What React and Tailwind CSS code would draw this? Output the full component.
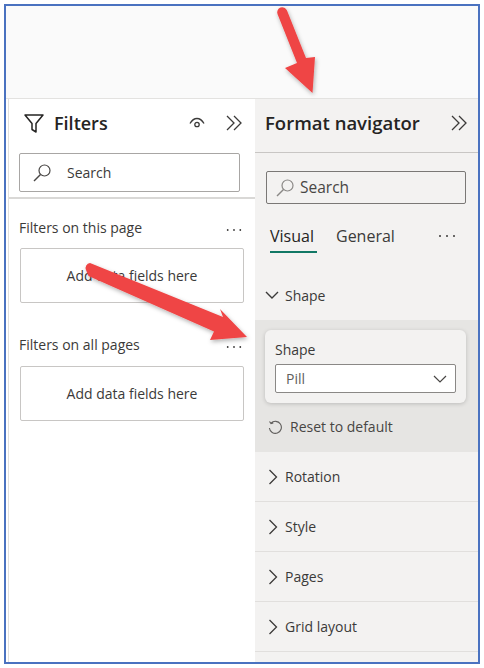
const font = { fontFamily: '"Open Sans", "Noto Sans", sans-serif' };

function Chevrons({ className }) {
  return (
    <svg className={className} width="18" height="16" viewBox="0 0 18 16" fill="none" stroke="#3b3a39" strokeWidth="1.3">
      <path d="M2 1l7 7-7 7M9 1l7 7-7 7" />
    </svg>
  );
}

function SearchIcon({ color }) {
  return (
    <svg width="20" height="20" viewBox="0 0 20 20" fill="none" stroke={color} strokeWidth="1.2">
      <circle cx="12.5" cy="7.5" r="5.5" />
      <path d="M8.5 11.5L2 18" strokeWidth="1.5" />
    </svg>
  );
}

function Dots({ className }) {
  return (
    <svg className={className} width="18" height="4" viewBox="0 0 18 4" fill="#3b3a39">
      <circle cx="2" cy="2" r="1" />
      <circle cx="9" cy="2" r="1" />
      <circle cx="16" cy="2" r="1" />
    </svg>
  );
}

function Right() {
  return (
    <svg width="10" height="16" viewBox="0 0 10 16" fill="none" stroke="#3b3a39" strokeWidth="1.3">
      <path d="M1.5 1l7 7-7 7" />
    </svg>
  );
}

function DropBox({ mt }) {
  return (
    <div className={`${mt} ml-[11px] mr-[11px] h-[55px] flex items-center justify-center border border-[#c8c6c4] rounded-[2px] text-[14px] text-[#3b3a39] bg-white`}>
      Add data fields here
    </div>
  );
}

function Row({ label }) {
  return (
    <div className="h-[50px] flex items-center pl-[13px] gap-[7px] border-b border-[#e1dfdd] text-[14px] font-medium text-[#3b3a39]">
      <Right />
      <span>{label}</span>
    </div>
  );
}

export default function App() {
  return (
    <div style={font} className="relative w-[484px] h-[668px] bg-white overflow-hidden pt-[4px] pl-[4px]">
      <div className="w-[476px] h-[660px] border-2 border-[#4a72c0] bg-white flex flex-col overflow-hidden">
        <div className="h-[93px] shrink-0 bg-[#fafafa] border-b border-[#e3e2e0]" />
        <div className="flex flex-1 min-h-0 pl-[2px]">
          <div className="w-[247px] shrink-0 bg-white border-l border-[#e1dfdd]">
            <div className="h-[48px] flex items-center pl-[14px] pr-[12px]">
              <svg width="22" height="22" viewBox="0 0 22 22" fill="none" stroke="#252423" strokeWidth="1.5">
                <path d="M2 3h18l-7 8.500V20l-4-2.500v-6z" strokeLinejoin="round" />
              </svg>
              <span className="ml-[9px] text-[18px] font-semibold text-[#252423]">Filters</span>
              <svg className="ml-auto mr-[20px]" width="16" height="12" viewBox="0 0 16 12" fill="none" stroke="#3b3a39" strokeWidth="1.3">
                <path d="M1 6.500C3 3 5.500 1.500 8 1.500s5 1.500 7 5" />
                <circle cx="8" cy="7.500" r="2.200" />
              </svg>
              <Chevrons />
            </div>
            <div className="ml-[10px] w-[221px] h-[39px] mt-[6px] flex items-center pl-[12px] gap-[15px] border border-[#a8a6a4] rounded-[2px] text-[14px] text-[#3b3a39]">
              <SearchIcon color="#484644" />
              <span>Search</span>
            </div>
            <div className="mt-[5px] border-t-2 border-[#d9d8d6]" />
            <div className="mt-[18px] pl-[10px] pr-[11px] h-[20px] flex items-center justify-between text-[14px] text-[#3b3a39]">
              <span>Filters on this page</span>
              <Dots className="mt-[6px] mr-[1px] scale-90" />
            </div>
            <DropBox mt="mt-[11px]" />
            <div className="mt-[31px] pl-[10px] pr-[11px] h-[20px] flex items-center justify-between text-[14px] text-[#3b3a39]">
              <span>Filters on all pages</span>
              <Dots className="mt-[6px] mr-[1px] scale-90" />
            </div>
            <DropBox mt="mt-[12px]" />
          </div>
          <div className="flex-1 min-w-0 bg-[#f3f2f1]">
            <div className="h-[54px] flex items-center pl-[10px] pr-[10px] pb-[6px] justify-between border-b border-[#c8c6c4]">
              <span className="text-[18.500px] font-semibold text-[#252423]">Format navigator</span>
              <Chevrons />
            </div>
            <div className="mt-[18px] ml-[11px] w-[200px] h-[33px] flex items-center pl-[8px] gap-[5px] border border-[#7a7876] rounded-[2px] text-[15.500px] text-[#484644]">
              <SearchIcon color="#8a8886" />
              <span>Search</span>
            </div>
            <div className="mt-[20px] pl-[15px] pr-[22px] flex items-start text-[16px] text-[#3b3a39]">
              <div className="w-[47px] h-[29px] border-b-2 border-[#117865] font-medium text-[#252423]">Visual</div>
              <div className="ml-[19px]">General</div>
              <Dots className="ml-auto mt-[10px]" />
            </div>
            <div className="mt-[29px] h-[38px] pl-[10px] pb-[12px] flex items-center gap-[6px] text-[14px] font-medium text-[#3b3a39]">
              <svg width="14" height="9" viewBox="0 0 14 9" fill="none" stroke="#3b3a39" strokeWidth="1.4">
                <path d="M1 1l6 6 6-6" />
              </svg>
              <span>Shape</span>
            </div>
            <div className="h-[132px] bg-[#e6e5e3] pt-[10px]">
              <div className="ml-[10px] w-[201px] h-[73px] rounded-[6px] bg-[#f3f2f1] shadow-[0_1px_4px_rgba(0,0,0,0.18)] pt-[10px] px-[10px]">
                <div className="text-[14px] leading-[19px] text-[#3b3a39]">Shape</div>
                <div className="mt-[5px] h-[29px] flex items-center justify-between pl-[10px] pr-[8px] bg-white border border-[#8a8886] rounded-[2px] text-[14px] text-[#605e5c]">
                  <span>Pill</span>
                  <svg width="14" height="8" viewBox="0 0 14 8" fill="none" stroke="#484644" strokeWidth="1.2">
                    <path d="M1 1l6 6 6-6" />
                  </svg>
                </div>
              </div>
              <div className="mt-[14px] ml-[13px] flex items-center gap-[8px] text-[14px] leading-[19px] text-[#484644]">
                <svg width="14" height="14" viewBox="0 0 14 14" fill="none" stroke="#605e5c" strokeWidth="1.1">
                  <path d="M3 3.200A6 6 0 1 1 1.400 8M1.500 1.500L3 3.500l2.300-.6" />
                </svg>
                <span>Reset to default</span>
              </div>
            </div>
            <Row label="Rotation" />
            <Row label="Style" />
            <Row label="Pages" />
            <Row label="Grid layout" />
          </div>
        </div>
      </div>
      <svg className="absolute left-0 top-0 pointer-events-none" width="484" height="668" viewBox="0 0 484 668">
        <defs>
          <filter id="s" x="-20%" y="-20%" width="140%" height="140%">
            <feDropShadow dx="1" dy="2" stdDeviation="2" floodColor="#000" floodOpacity="0.3" />
          </filter>
        </defs>
        <g fill="#ef4444" filter="url(#s)">
          <path d="M277.500 14a5 5 0 0 1 9.500-3.500L306 58l9-1-2.500 36-27.500-25 12-5z" />
          <path d="M86 270a5 5 0 0 1 4-7L223 317l-3-8 27 28-37 3 4-8.500L88.500 276z" />
        </g>
      </svg>
    </div>
  );
}
